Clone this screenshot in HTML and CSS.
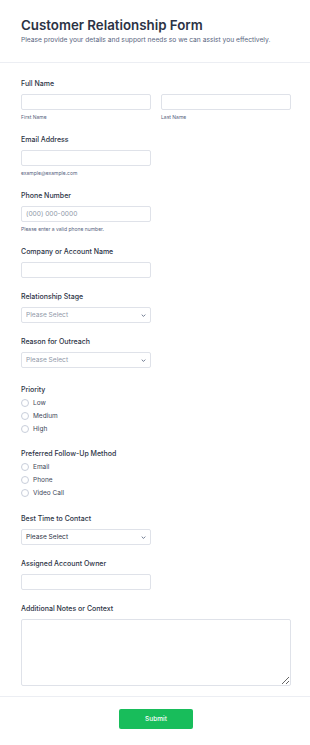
FILE: index.html
```html
<!DOCTYPE html>
<html lang="en">
<head>
<meta charset="utf-8">
<title>Customer Relationship Form</title>
<link rel="stylesheet" href="styles.css">
</head>
<body>
<div class="page">
  <header class="header">
    <h1 class="title">Customer Relationship Form</h1>
    <p class="subtitle">Please provide your details and support needs so we can assist you effectively.</p>
  </header>
  <form class="form">
    <div class="field">
      <label class="label">Full Name</label>
      <div class="name-row">
        <div class="name-col">
          <input class="input" type="text">
          <span class="sublabel">First Name</span>
        </div>
        <div class="name-col">
          <input class="input" type="text">
          <span class="sublabel">Last Name</span>
        </div>
      </div>
    </div>
    <div class="field">
      <label class="label">Email Address</label>
      <input class="input half" type="email">
      <span class="sublabel">example@example.com</span>
    </div>
    <div class="field">
      <label class="label">Phone Number</label>
      <input class="input half" type="tel" placeholder="(000) 000-0000">
      <span class="sublabel">Please enter a valid phone number.</span>
    </div>
    <div class="field">
      <label class="label">Company or Account Name</label>
      <input class="input half" type="text">
    </div>
    <div class="field">
      <label class="label">Relationship Stage</label>
      <div class="select-wrap half">
        <select class="select muted"><option>Please Select</option></select>
        <svg class="chevron" viewBox="0 0 8 5" width="5" height="3"><path d="M1 1l3 3 3-3" fill="none" stroke="#57647e" stroke-width="1.4"/></svg>
      </div>
    </div>
    <div class="field">
      <label class="label">Reason for Outreach</label>
      <div class="select-wrap half">
        <select class="select muted"><option>Please Select</option></select>
        <svg class="chevron" viewBox="0 0 8 5" width="5" height="3"><path d="M1 1l3 3 3-3" fill="none" stroke="#57647e" stroke-width="1.4"/></svg>
      </div>
    </div>
    <div class="field radio-field">
      <label class="label">Priority</label>
      <div class="radios">
        <label class="radio"><span class="circle"></span>Low</label>
        <label class="radio"><span class="circle"></span>Medium</label>
        <label class="radio"><span class="circle"></span>High</label>
      </div>
    </div>
    <div class="field">
      <label class="label">Preferred Follow-Up Method</label>
      <div class="radios">
        <label class="radio"><span class="circle"></span>Email</label>
        <label class="radio"><span class="circle"></span>Phone</label>
        <label class="radio"><span class="circle"></span>Video Call</label>
      </div>
    </div>
    <div class="field">
      <label class="label">Best Time to Contact</label>
      <div class="select-wrap half">
        <select class="select"><option>Please Select</option></select>
        <svg class="chevron" viewBox="0 0 8 5" width="5" height="3"><path d="M1 1l3 3 3-3" fill="none" stroke="#57647e" stroke-width="1.4"/></svg>
      </div>
    </div>
    <div class="field">
      <label class="label">Assigned Account Owner</label>
      <input class="input half" type="text">
    </div>
    <div class="field">
      <label class="label">Additional Notes or Context</label>
      <textarea class="textarea"></textarea>
    </div>
  </form>
  <div class="footer">
    <button class="submit" type="button">Submit</button>
  </div>
</div>
</body>
</html>
```
FILE: styles.css
```css
* { box-sizing: border-box; }
html, body { margin: 0; padding: 0; background: #fff; }
body { font-family: Inter, "Noto Sans", sans-serif; color: #2c3345; }

.header {
  padding: 17px 19px 17px 21px;
  border-bottom: 1px solid #eceef3;
}
.title {
  margin: 0;
  font-size: 13.3px;
  line-height: 16px;
  font-weight: 600;
  color: #2c3345;
}
.subtitle {
  margin: 3px 0 0;
  font-size: 6.66px;
  line-height: 9px;
  color: #57647e;
}

.form {
  padding: 16px 19px 10px 21px;
  display: flex;
  flex-direction: column;
  gap: 14.1px;
}
.field { display: flex; flex-direction: column; align-items: flex-start; }
.radio-field { margin-top: 2px; }
.label {
  font-size: 7px;
  line-height: 9px;
  font-weight: 500;
  color: #2c3345;
  margin-bottom: 6px;
}
.name-row { display: flex; gap: 10px; width: 100%; }
.name-col { flex: 1; display: flex; flex-direction: column; }
.input, .select {
  display: block;
  width: 100%;
  height: 16px;
  margin: 0;
  border: 1px solid #dfe2e9;
  border-radius: 2px;
  background: #fff;
  padding: 0 4px;
  font-family: Inter, sans-serif;
  font-size: 6.6px;
  color: #2c3345;
  outline: none;
}
.half { width: 130px; }
.input::placeholder { color: #8f98a8; }
.sublabel {
  margin-top: 4px;
  font-size: 5px;
  line-height: 7px;
  color: #57647e;
}
.select-wrap { position: relative; }
.select {
  appearance: none;
  -webkit-appearance: none;
}
.select.muted { color: #8f98a8; }
.chevron {
  position: absolute;
  right: 5px;
  top: 7px;
}
.radios {
  margin-top: -3.5px;
  display: flex;
  flex-direction: column;
}
.radio {
  display: flex;
  align-items: center;
  height: 13px;
  gap: 4px;
  font-size: 6.5px;
  color: #3e4759;
}
.circle {
  width: 8px;
  height: 8px;
  border: 1px solid #c8ceda;
  border-radius: 50%;
  background: #fff;
}
.textarea {
  display: block;
  width: 100%;
  height: 67.5px;
  margin: 0;
  border: 1px solid #dfe2e9;
  border-radius: 2px;
  resize: vertical;
  outline: none;
  font-family: Inter, sans-serif;
}
.footer {
  border-top: 1px solid #eceef3;
  padding: 12px 19px 0 21px;
  display: flex;
  justify-content: center;
}
.submit {
  width: 74px;
  height: 20px;
  border: none;
  border-radius: 2px;
  background: #18bd5b;
  color: #fff;
  font-family: Inter, sans-serif;
  font-size: 6.5px;
  font-weight: 500;
}
```
